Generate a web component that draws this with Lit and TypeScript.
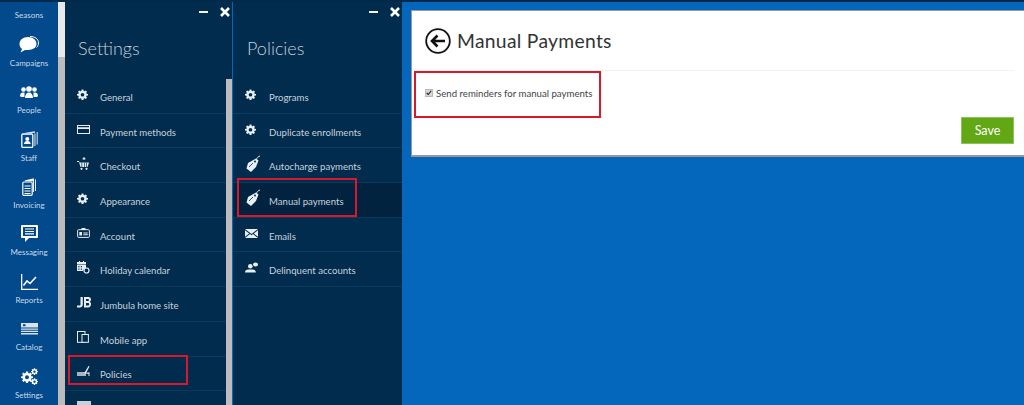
import { LitElement, html, css, svg } from "lit";
import { customElement } from "lit/decorators.js";

const gear = (s = 16) => html`<svg width=${s} height=${s} viewBox="0 0 24 24" fill="currentColor"><path fill-rule="evenodd" d="M10 1h4l.6 3.2 1.900.8L19.200 3.200l2.600 2.600L20 8.500l.8 1.900L24 11v3l-3.200.6-.8 1.900 1.800 2.700-2.600 2.600-2.700-1.800-1.900.8L14 24h-4l-.6-3.200-1.900-.8-2.700 1.800-2.600-2.600L4 16.500l-.8-1.900L0 14v-3l3.200-.6.8-1.900L2.200 5.800l2.600-2.600L7.500 5l1.900-.8zM12 8.500a4 4 0 1 0 0 8 4 4 0 0 0 0-8z"/></svg>`;
const ic = (w: number, h: number, body: unknown) => html`<svg width=${w} height=${h} viewBox="0 0 ${w} ${h}" fill="currentColor">${body}</svg>`;

const tag = ic(16, 18, svg`<path d="M11 3.500l2.500 2L11 12l-5 5-4.500-3.500L3 8z"/><path d="M11 5C12 3 13 1.500 15 1" fill="none" stroke="currentColor" stroke-width="1"/><circle cx="10" cy="6.500" r="1" fill="#012c4e"/><path d="M4 12l4-4" stroke="#012c4e" stroke-width=".8"/>`);

const side: [string, unknown][] = [
  ["Seasons", ic(26, 20, svg`<path d="M3 0h20v7H3z" fill="none" stroke="currentColor" stroke-width="2"/><path d="M7 3h12v2H7z"/>`)],
  ["Campaigns", ic(20, 17, svg`<path d="M9 1c5 0 8.500 3 8.500 6.800S14 14 9 14H6l-4.500 2.500L3 13C1 11.500.5 9.800.5 7.800.5 4 4 1 9 1z"/><path d="M11 .5c5 0 8.500 2.500 8.500 6.500 0 2-1 3.500-2 4.500" fill="none" stroke="currentColor" stroke-width="1"/>`)],
  ["People", ic(18, 12, svg`<circle cx="3.500" cy="3.500" r="2.300"/><circle cx="14.500" cy="3.500" r="2.300"/><circle cx="9" cy="3" r="2.800"/><path d="M0 10c0-2.500 1.500-3.500 3-3.500h1.500V11H1zM18 10c0-2.500-1.500-3.500-3-3.500h-1.500V11H17zM5 12c0-3.500 1.800-5.500 4-5.500s4 2 4 5.500z"/>`)],
  ["Staff", ic(17, 17, svg`<rect x=".8" y="3" width="11" height="13.500" rx="1.200" fill="none" stroke="currentColor" stroke-width="1.300"/><path d="M13.500 2.500h.9v12.500h-.9zM15.700 1h.9v12.500h-.9zM3 2l9.500-1.500h1.500v1.300z"/><circle cx="6.300" cy="8" r="2"/><path d="M3 13c0-2 1.300-3 3.300-3s3.300 1 3.300 3z"/>`)],
  ["Invoicing", ic(14, 18, svg`<rect x=".8" y="4" width="9.400" height="13.400" rx="1.200" fill="none" stroke="currentColor" stroke-width="1.200"/><path d="M2.500 7.500h6v1h-6zM2.500 10h6v1h-6zM2.500 12.500h6v1h-6zM2.500 15h6v.9h-6zM2.500 2.500l8.500-2h1V14h-.9V3.300H3.500zM13 1.500h.9V13H13z"/>`)],
  ["Messaging", ic(17, 18, svg`<path fill-rule="evenodd" d="M1 0h15a1 1 0 0 1 1 1v11a1 1 0 0 1-1 1H8l-4 4v-4H1a1 1 0 0 1-1-1V1a1 1 0 0 1 1-1zM2 2v9h13V2z"/><path d="M4 3.500h9v1.100H4zM4 5.900h9v1.100H4zM4 8.300h9v1.100H4z"/>`)],
  ["Reports", ic(17, 16, svg`<path d="M0 0h1.300v14.700H17V16H0z"/><path d="M2.500 11.500l3.500-4.500 3 2.500 6-6.500" fill="none" stroke="currentColor" stroke-width="1.600"/>`)],
  ["Catalog", ic(17, 12, svg`<path d="M0 0h17v4.500H0z" opacity=".85"/><path d="M0 5.500h17v1.200H0zM0 7.800h17V9H0zM0 10h17v1.500H0z" opacity=".85"/><path d="M2 1.200h2.500v2H2z" fill="#024a8c"/>`)],
  ["Settings", html`<span class="gears">${gear(12)}<span class="g2">${gear(7)}</span><span class="g3">${gear(7)}</span></span>`],
];

const settings: [string, unknown][] = [
  ["General", gear(11)],
  ["Payment methods", ic(13, 9, svg`<path fill-rule="evenodd" d="M0 0h13v9H0zM1 1v1.300h11V1zM1 4v4h11V4z"/>`)],
  ["Checkout", ic(12, 13, svg`<path d="M0 4h2l.5 1.500H12L10.500 10H3.500L2 5H0z"/><path d="M4.500 5.500h.7V10h-.7zM7 5.500h.7V10H7zM9.300 5.500h.7V10h-.7z" fill="#012c4e"/><circle cx="4.500" cy="11.800" r="1.100"/><circle cx="9.500" cy="11.800" r="1.100"/><path d="M6.500 0h1v3h-1zM5.500 1.200h3v1h-3z"/>`)],
  ["Appearance", gear(11)],
  ["Account", ic(13, 10, svg`<rect x=".6" y="1.700" width="11.800" height="7.700" rx="1" fill="none" stroke="currentColor" stroke-width="1"/><path d="M4.500 0h4v2h-4zM2.300 4h2.700v3.500H2.300zM6.300 4.500h4.500v.9H6.300zM6.300 6.300h4.500v.9H6.300z"/>`)],
  ["Holiday calendar", ic(13, 13, svg`<path fill-rule="evenodd" d="M0 1h9v2H0zM0 3.500h9V7a3.500 3.500 0 0 0-3 3H0zM1.300 5h1.200v1.200H1.300zM3.800 5H5v1.200H3.800zM1.300 7.500h1.200v1.200H1.300zM3.800 7.500H5v1.200H3.800z"/><path d="M2 0h1v2H2zM6 0h1v2H6z"/><circle cx="9.500" cy="9.500" r="2.500" fill="none" stroke="currentColor" stroke-width="1.200"/>`)],
  ["Jumbula home site", ic(14, 11, svg`<path d="M3.500 0h2.300v7.500c0 2-1.300 3-3 3H0V8.500h2.500c.7 0 1-.4 1-1z"/><path fill-rule="evenodd" d="M7 0h4.500C13 0 14 1 14 2.500c0 1-.5 1.800-1.200 2.200.8.400 1.200 1.300 1.200 2.300 0 2-1.200 3.500-3 3.500H7zM9 2v2h2a1 1 0 0 0 0-2zM9 6v2.500h2a1.250 1.250 0 0 0 0-2.500z"/>`)],
  ["Mobile app", ic(12, 12, svg`<rect x=".5" y=".5" width="7.500" height="10.800" fill="none" stroke="currentColor" stroke-width="1"/><rect x="5" y="3.500" width="6.400" height="7.800" fill="#012c4e" stroke="currentColor" stroke-width="1"/>`)],
  ["Policies", ic(14, 11, svg`<path d="M0 6h9v4H0z" opacity=".7"/><path d="M7 7.500L11.500 0l1 .6-3.300 6.100 3.300-.4V10h-1V7.800z"/>`)],
  ["", ic(14, 11, svg`<path d="M0 0h14v11H0z" opacity=".85"/>`)],
];

const policies: [string, unknown][] = [
  ["Programs", gear(11)],
  ["Duplicate enrollments", gear(11)],
  ["Autocharge payments", tag],
  ["Manual payments", tag],
  ["Emails", ic(13, 9, svg`<path d="M0 0h13L6.500 5zM0 1.300l4.200 3.200L0 7.800zM13 1.300L8.800 4.500 13 7.800zM5 5.100L6.500 6.300 8 5.100 13 9H0z"/>`)],
  ["Delinquent accounts", ic(13, 11, svg`<ellipse cx="10.500" cy="2.500" rx="2.500" ry="2"/><circle cx="5.300" cy="4.300" r="2.300"/><path d="M0 10.500c0-1.800 1.300-3 3.200-3h4.400c1.900 0 3.200 1.200 3.200 3z"/>`)],
];

@customElement("app-root")
export class AppRoot extends LitElement {
  static styles = css`
    :host { display: block; height: 405px; overflow: hidden; position: relative; font-family: "Lato", "Liberation Sans", sans-serif; }
    .page { display: flex; height: 405px; background: #0567bb; border-top: 2px solid #02294a; box-sizing: border-box; }
    .side { width: 58px; flex: none; background: #024a8c; overflow: hidden; color: #fff; }
    .side-list { margin-top: -26px; }
    .side-item { height: 47.4px; display: flex; flex-direction: column; align-items: center; justify-content: flex-end; }
    .side-icon { height: 22px; display: flex; align-items: center; justify-content: center; margin-bottom: 1px; }
    .side-label { font-size: 8px; line-height: 12px; color: #c9d9e8; height: 14px; }
    .gears { position: relative; display: block; width: 17px; height: 17px; }
    .gears > svg { position: absolute; left: 0; top: 3px; }
    .g2, .g3 { position: absolute; left: 10px; display: flex; }
    .g2 { top: 0; }
    .g3 { top: 10px; }
    .bar { width: 7px; flex: none; background: linear-gradient(#e9e9e9 0 55px, #bcbcbc 55px); }
    .panel { flex: none; background: #012c4e; color: #c6d2dc; display: flex; flex-direction: column; position: relative; overflow: hidden; height: 403px; }
    .p1 { width: 167px; }
    .p2 { width: 169px; margin-left: 1px; }
    .controls { height: 18px; flex: none; display: flex; justify-content: flex-end; align-items: center; gap: 12px; padding: 0 2px 0 0; color: #fff; margin-top: 1px; }
    .min { width: 9px; height: 2px; background: #f2f2f2; }
    .x { width: 10px; height: 10px; }
    .title { flex: none; font-family: "Lato", sans-serif; font-weight: 300; font-size: 18px; line-height: 24px; color: #c3d0db; padding-left: 13px; margin-top: 15px; height: 24px; }
    .p2 .title { padding-left: 14px; }
    .sep { height: 19px; flex: none; }
    .list { position: relative; flex: none; }
    .p1 .list { width: 161px; }
    .sb { position: absolute; right: 0; top: 77px; bottom: 0; width: 6px; background: #bcbcbc; }
    .row { height: 34.7px; box-sizing: border-box; border-bottom: 1px solid #0a3a5e; display: flex; align-items: center; font-size: 9.600px; color: #c6d2dc; white-space: nowrap; }
    .row.on { background: #01233f; }
    .row-ic { width: 35px; padding-left: 12px; box-sizing: border-box; display: flex; color: #e9eef2; flex: none; margin-top: -3px; }
    .p2 .row-ic { width: 36px; }
    .row-tx { margin-top: 3px; }
    .main { flex: 1; padding: 8px 0 0 9px; min-width: 0; }
    .card { background: #fff; height: 147px; box-sizing: border-box; border-top: 1px solid #999; border-left: 1px solid #999; border-bottom: 2px solid #999; display: flex; flex-direction: column; }
    .card-h { height: 59px; display: flex; align-items: center; gap: 6px; padding-left: 13px; margin-right: 10px; border-bottom: 1px solid #f3f3f3; color: #222; flex: none; }
    .card-h h1 { margin: 0; font-family: "Lato", sans-serif; font-weight: 400; font-size: 19.300px; letter-spacing: .3px; color: #333; }
    .chk { display: flex; align-items: center; gap: 3px; padding: 14px 0 0 13px; font-size: 9.650px; color: #444; height: 16px; flex: none; }
    .box { width: 8px; height: 8px; background: #d5d5d5; border: 1px solid #bbb; box-sizing: border-box; display: flex; }
    .actions { display: flex; justify-content: flex-end; padding: 16px 10px 0 0; }
    .save { width: 53px; height: 27px; background: #62a814; border: 1px solid #8cc35a; box-sizing: border-box; color: #fff; font: 400 12.500px "Lato", sans-serif; padding: 0; }
    .red { position: absolute; border: 2px solid #d9182b; box-sizing: border-box; pointer-events: none; }
    .r1 { left: 68px; top: 355px; width: 120px; height: 30px; }
    .r2 { left: 237px; top: 178px; width: 120px; height: 39px; }
    .r3 { left: 414px; top: 71px; width: 187px; height: 47px; }
  `;

  private panel(cls: string, title: string, rows: [string, unknown][], active: string, sb: boolean) {
    return html`<section class="panel ${cls}">
      <div class="controls"><span class="min"></span>
        <svg class="x" viewBox="0 0 10 10"><path d="M1 1l8 8M9 1L1 9" stroke="#fff" stroke-width="2.600"/></svg></div>
      <div class="title">${title}</div>
      <div class="sep"></div>
      <div class="list">
        ${rows.map(([t, i]) => html`<div class="row ${t && t === active ? "on" : ""}"><span class="row-ic">${i}</span><span class="row-tx">${t}</span></div>`)}
      </div>
      ${sb ? html`<div class="sb"></div>` : ""}
    </section>`;
  }

  render() {
    return html`<div class="page">
      <nav class="side"><div class="side-list">
        ${side.map(([t, i]) => html`<div class="side-item"><span class="side-icon">${i}</span><span class="side-label">${t}</span></div>`)}
      </div></nav>
      <div class="bar"></div>
      ${this.panel("p1", "Settings", settings, "", true)}
      ${this.panel("p2", "Policies", policies, "Manual payments", false)}
      <main class="main">
        <div class="card">
          <header class="card-h">
            <svg width="26" height="26" viewBox="0 0 26 26" fill="none" stroke="#111"><circle cx="13" cy="13" r="11.800" stroke-width="1.800"/><path d="M20 13H7M12.500 7.500L7 13l5.500 5.500" stroke-width="2.600"/></svg>
            <h1>Manual Payments</h1>
          </header>
          <label class="chk"><span class="box"><svg viewBox="0 0 8 8" width="6" height="6" fill="none" stroke="#222" stroke-width="1.500"><path d="M1 4l2 2 4-5"/></svg></span>Send reminders for manual payments</label>
          <div class="actions"><button class="save">Save</button></div>
        </div>
      </main>
    </div>
    <div class="red r1"></div><div class="red r2"></div><div class="red r3"></div>`;
  }
}
